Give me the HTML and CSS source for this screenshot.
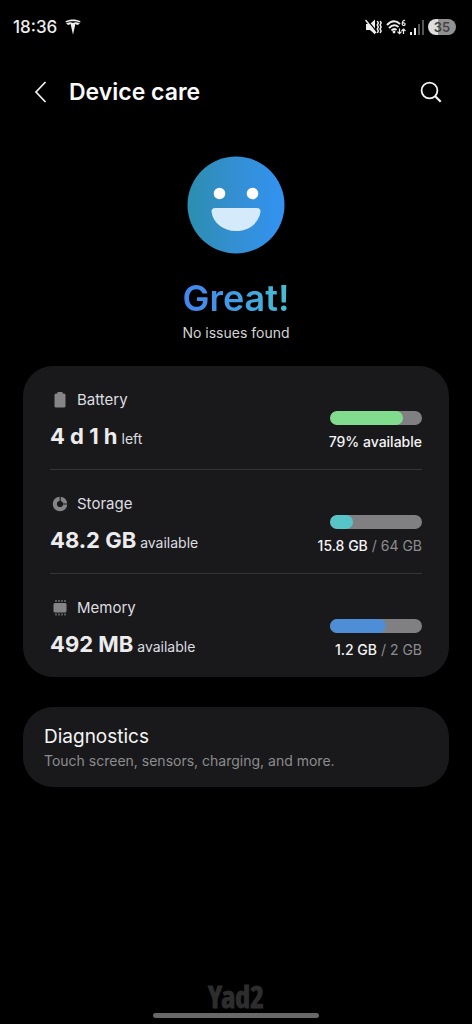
FILE: index.html
```html
<!DOCTYPE html>
<html lang="en">
<head>
<meta charset="utf-8">
<meta name="viewport" content="width=device-width, initial-scale=1">
<title>Device care</title>
<link rel="stylesheet" href="styles.css">
</head>
<body>
<div class="screen">
  <div class="status-bar">
    <div class="status-group">
      <span class="clock">18:36</span>
      <svg class="brand" width="16" height="16" viewBox="0 0 16 16" fill="#eee" aria-hidden="true"><path d="M.5 2.200C4.800 0 11.200 0 15.500 2.200l-.4 1.200C11 1.800 5 1.800.9 3.400z"/><path d="M1.300 4.200C4 2.900 6 2.900 8 3.900 10 2.900 12 2.900 14.700 4.200c-.5 1.200-1.400 1.700-2.800 1.700-.3-.6-.8-.8-1.500-.8L8 15.800 5.600 5.100c-.7 0-1.200.2-1.500.8C2.700 5.900 1.800 5.400 1.300 4.200z"/></svg>
    </div>
    <div class="status-icons">
      <svg width="17" height="16" viewBox="0 0 17 16" aria-hidden="true"><path d="M1 5h4l5-4.500v15L5 11H1z" fill="#eee"/><path d="M1.500 0l10 12.500" stroke="#000" stroke-width="1.300"/><path d="M.5 1l10.500 13" stroke="#eee" stroke-width="1.500"/><path d="M12.300 2l1 2-1 2 1 2-1 2 1 2-1 2M15.300 2l.8 2-1 2 1 2-1 2 1 2-1 2" fill="none" stroke="#eee" stroke-width="1.500"/></svg>
      <svg width="20" height="17" viewBox="0 0 20 17" fill="none" stroke="#eee" stroke-width="1.900" aria-hidden="true"><path d="M1 6Q7.500-1 14 5M3 9Q8 4 12.500 8M5.500 11.500Q8 9 10.500 11"/><circle cx="8" cy="13" r="1.400" fill="#eee" stroke="none"/><path d="M19 1.500c-3-1-3.500 5-1.500 5 2.300 0 2-3-.2-2.700-.8.100-1.200.8-1 1.600M13.500 9.500v5m-2-1.800 2 2 2-2M17.500 15V10m-2 2 2-2 2 2" stroke-width="1.200"/></svg>
      <svg width="14" height="15" viewBox="0 0 14 15" aria-hidden="true"><path d="M0 12h2v3H0zM4 8h2v7H4z" fill="#eee"/><path d="M8 4h2v11H8zM12 0h2v15h-2z" fill="#555"/></svg>
      <span class="battery-pill">35</span>
    </div>
  </div>

  <header class="header">
    <button class="icon-button" type="button" aria-label="Back"><svg width="14" height="24" viewBox="0 0 14 24" fill="none" stroke="#f4f4f4" stroke-width="1.700"><path d="M12.500 2 3 12l9.500 10"/></svg></button>
    <h1 class="title">Device care</h1>
    <button class="icon-button" type="button" aria-label="Search"><svg width="22" height="22" viewBox="0 0 22 22" fill="none" stroke="#f4f4f4" stroke-width="1.800"><circle cx="9.500" cy="9.500" r="7.900"/><path d="m15 15 5.700 5.700" stroke-width="2.200"/></svg></button>
  </header>

  <main class="content">
    <section class="summary">
      <svg class="face" width="98" height="98" viewBox="0 0 98 98" role="img" aria-label="Smiling face">
        <defs><linearGradient id="face-fill" x1="0" y1="0" x2="1" y2="0"><stop offset="0" stop-color="#2c8eb0"/><stop offset=".5" stop-color="#348fd2"/><stop offset="1" stop-color="#3293f2"/></linearGradient></defs>
        <circle cx="49" cy="49" r="48.500" fill="url(#face-fill)"/>
        <circle cx="32.500" cy="37.500" r="5.800" fill="#fff"/><circle cx="65.500" cy="37.500" r="5.800" fill="#fff"/>
        <path d="M28 52h42q3.500 0 3.500 3.500C72 67 62 75 49 75S26 67 24.500 55.500Q24.500 52 28 52z" fill="#d5eafa"/>
      </svg>
      <h2 class="verdict">Great!</h2>
      <p class="verdict-note">No issues found</p>
    </section>

    <section class="card stats">
      <div class="stat">
        <div class="stat-main">
          <div class="stat-label"><svg width="20" height="18" viewBox="0 0 20 18" aria-hidden="true"><path d="M7.500 1h5v1.500h1.500q1.500 0 1.500 1.500v11q0 1.500-1.500 1.500H6q-1.500 0-1.500-1.500V4q0-1.500 1.500-1.500h1.500z" fill="#858587"/></svg>Battery</div>
          <div class="stat-value"><strong>4 d 1 h</strong> left</div>
        </div>
        <div class="stat-side">
          <div class="bar"><div class="fill green" style="width:79%"></div></div>
          <div class="usage"><b>79% available</b></div>
        </div>
      </div>
      <div class="stat">
        <div class="stat-main">
          <div class="stat-label"><svg width="20" height="18" viewBox="0 0 20 18" aria-hidden="true"><circle cx="10" cy="9" r="5.200" fill="none" stroke="#858587" stroke-width="4.200"/><path d="M10.200 0v6.500M12 9h7" stroke="#19191b" stroke-width="1.200"/></svg>Storage</div>
          <div class="stat-value"><strong>48.2 GB</strong> available</div>
        </div>
        <div class="stat-side">
          <div class="bar"><div class="fill teal" style="width:25%"></div></div>
          <div class="usage"><b>15.8 GB</b> / 64 GB</div>
        </div>
      </div>
      <div class="stat">
        <div class="stat-main">
          <div class="stat-label"><svg width="20" height="18" viewBox="0 0 20 18" aria-hidden="true"><rect x="3.500" y="4" width="13" height="9.500" rx="1.500" fill="#858587"/><path d="M6 1v2m3-2v2m3-2v2m3-2v2M6 14.500v2m3-2v2m3-2v2m3-2v2" stroke="#858587" stroke-width="1.200"/></svg>Memory</div>
          <div class="stat-value"><strong>492 MB</strong> available</div>
        </div>
        <div class="stat-side">
          <div class="bar"><div class="fill blue" style="width:61%"></div></div>
          <div class="usage"><b>1.2 GB</b> / 2 GB</div>
        </div>
      </div>
    </section>

    <a class="card diagnostics" href="#diagnostics">
      <span class="diagnostics-title">Diagnostics</span>
      <span class="diagnostics-note">Touch screen, sensors, charging, and more.</span>
    </a>
  </main>

  <footer class="footer">
    <span class="watermark">Yad2</span>
    <span class="home-bar"></span>
  </footer>
</div>
</body>
</html>
```
FILE: styles.css
```css
* { box-sizing: border-box; }
body {
  margin: 0;
  background: #000;
  color: #eee;
  font-family: Inter, Roboto, "Liberation Sans", sans-serif;
  font-size: 14px;
  line-height: 20px;
}
h1, h2, p { margin: 0; }
svg { display: block; flex: none; }
.screen { min-height: 100vh; display: flex; flex-direction: column; }
.status-bar {
  display: flex;
  justify-content: space-between;
  align-items: center;
  height: 54px;
  padding: 0 16px 0 13px;
}
.status-group { display: flex; align-items: center; gap: 8px; }
.clock { font-size: 17px; font-weight: 500; }
.status-icons { display: flex; align-items: center; gap: 4px; }
.battery-pill {
  width: 28px;
  height: 16px;
  border-radius: 8px;
  background: linear-gradient(90deg, #dedede 35%, #929292 35%);
  color: #444;
  font-size: 13px;
  font-weight: 600;
  line-height: 16px;
  text-align: center;
}
.header {
  display: flex;
  align-items: center;
  height: 76px;
  padding: 0 25px 0 24px;
}
.icon-button {
  display: grid;
  place-items: center;
  width: 32px;
  height: 40px;
  padding: 0;
  border: 0;
  background: none;
}
.title {
  flex: 1;
  margin-left: 13px;
  color: #fafafa;
  font-size: 23px;
  font-weight: 600;
  line-height: 32px;
}
.content { padding: 26px 23px 0; }
.summary { display: flex; flex-direction: column; align-items: center; }
.verdict {
  margin-top: 20px;
  font-size: 36px;
  font-weight: 600;
  line-height: 48px;
  background: linear-gradient(90deg, #4583ef, #429ce5 50%, #44c0cf);
  background-clip: text;
  -webkit-background-clip: text;
  color: transparent;
}
.verdict-note { margin-top: 1px; color: #d4d4d4; }
.card { background: #19191b; border-radius: 30px; }
.stats { margin-top: 23px; padding: 0 27px; }
.stat {
  display: flex;
  justify-content: space-between;
  padding: 24px 0 14px;
}
.stat + .stat { border-top: 1px solid #353537; }
.stat-label { display: flex; align-items: center; gap: 7px; color: #dedee0; font-size: 15px; }
.stat-value { margin-top: 10px; line-height: 32px; color: #dedee0; }
.stat-value strong { font-size: 22px; font-weight: 700; color: #ececee; }
.stat-side {
  display: flex;
  flex-direction: column;
  align-items: flex-end;
  padding-top: 21px;
  color: #8c8c8e;
}
.bar {
  width: 92px;
  height: 14px;
  border-radius: 7px;
  overflow: hidden;
  background: #808082;
}
.fill { height: 100%; border-radius: 7px; }
.green { background: #81dc8d; }
.teal { background: #57c5c7; }
.blue { background: #4d8ed7; }
.usage { margin-top: 7px; }
.usage b { font-weight: 500; color: #f4f4f6; }
.diagnostics {
  display: flex;
  flex-direction: column;
  margin-top: 30px;
  padding: 16px 21px;
  color: #f5f5f5;
  text-decoration: none;
}
.diagnostics-title { font-size: 19px; line-height: 28px; }
.diagnostics-note { color: #8c8c8e; }
.footer {
  display: flex;
  flex-direction: column;
  align-items: center;
  margin-top: auto;
  padding-bottom: 6px;
}
.watermark {
  color: #2d2d2d;
  font-family: "Liberation Sans Narrow", "Open Sans Condensed", "DejaVu Sans Condensed", sans-serif;
  font-size: 30px;
  font-weight: 800;
  line-height: 32px;
  -webkit-text-stroke: 1px #2d2d2d;
}
.home-bar { width: 35%; height: 5px; border-radius: 3px; background: #686868; }
```
